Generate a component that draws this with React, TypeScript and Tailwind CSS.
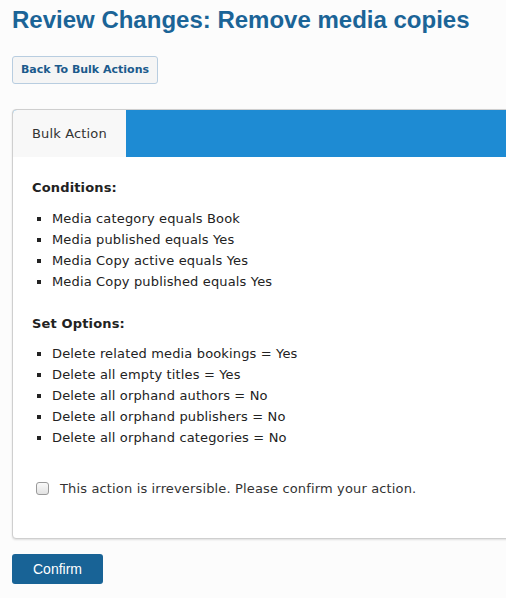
import React from "react";

const conditions = [
  "Media category equals Book",
  "Media published equals Yes",
  "Media Copy active equals Yes",
  "Media Copy published equals Yes",
];

const options = [
  "Delete related media bookings = Yes",
  "Delete all empty titles = Yes",
  "Delete all orphand authors = No",
  "Delete all orphand publishers = No",
  "Delete all orphand categories = No",
];

function BulletList({ items }: { items: string[] }) {
  return (
    <ul className="flex flex-col">
      {items.map((item) => (
        <li key={item} className="flex items-center h-[21px]">
          <span className="w-[4px] h-[4px] bg-[#222] ml-[5px] mr-[11px] shrink-0" />
          <span>{item}</span>
        </li>
      ))}
    </ul>
  );
}

export default function App() {
  return (
    <div className="min-h-screen w-[506px] overflow-hidden bg-[#fcfcfc] pt-[6px] pl-3">
      <h1 className="font-['Liberation_Sans',Arial,sans-serif] font-bold text-[24px] leading-[28px] text-[#1b6497]">
        Review Changes: Remove media copies
      </h1>

      <button className="mt-[22px] h-[28px] w-[146px] rounded-[3px] border border-[#b8cde0] bg-[#f5f5f5] font-['DejaVu_Sans',Verdana,sans-serif] font-bold text-[11px] text-[#1b5a8c]">
        Back To Bulk Actions
      </button>

      <div className="mt-[25px] w-[540px] rounded-[4px] border border-[#cfcfcf] bg-white shadow-[0_1px_2px_rgba(0,0,0,0.12)] font-['DejaVu_Sans',Verdana,sans-serif] text-[13px] tracking-[0.15px] text-[#222]">
        <div className="flex h-[47px] bg-[#1e8bd3] rounded-t-[4px] overflow-hidden">
          <div className="w-[113px] bg-[#f8f8f8] pl-[19px] flex items-center text-[#333]">
            Bulk Action
          </div>
        </div>

        <div className="pt-[20px] pl-[19px] pb-[39px]">
          <div className="font-bold h-[21px] flex items-center">Conditions:</div>
          <div className="mt-[10px]">
            <BulletList items={conditions} />
          </div>

          <div className="mt-[21px] font-bold h-[21px] flex items-center">Set Options:</div>
          <div className="mt-[9px]">
            <BulletList items={options} />
          </div>

          <label className="mt-[30px] flex items-center h-[21px]">
            <span className="ml-[4px] mr-[11px] w-[13px] h-[13px] rounded-[3px] border border-[#9a9a9a] bg-gradient-to-b from-[#fafafa] to-[#e2e2e2]" />
            <span className="text-[#333]">This action is irreversible. Please confirm your action.</span>
          </label>
        </div>
      </div>

      <button className="mt-[15px] h-[30px] w-[91px] rounded-[3px] bg-[#186396] text-white font-['Liberation_Sans',Arial,sans-serif] text-[14px]">
        Confirm
      </button>
    </div>
  );
}
